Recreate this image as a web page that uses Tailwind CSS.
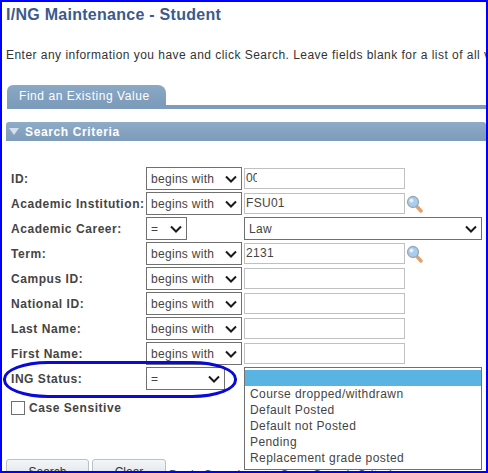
<!DOCTYPE html>
<html lang="en">
<head>
    <meta charset="UTF-8">
    <title>I/NG Maintenance - Student</title>
    <script src="https://cdn.jsdelivr.net/npm/@tailwindcss/browser@4"></script>
</head>
<body class="bg-white">
<div class="relative w-[488px] h-[473px] overflow-hidden border-2 border-[#0000ff] bg-white font-['Liberation_Sans',Arial,sans-serif] text-[#444]">

    <!-- Title and intro -->
    <h1 class="pl-[4px] pt-[3px] h-[20px] text-[16px] leading-[20px] font-bold tracking-[0.27px] text-[#3c5a8c] whitespace-nowrap">I/NG Maintenance - Student</h1>
    <p class="pl-[4px] mt-[23px] h-[20px] text-[12px] leading-[20px] tracking-[0.47px] text-[#333] whitespace-nowrap overflow-hidden">Enter any information you have and click Search. Leave fields blank for a list of all values.</p>

    <!-- Tab -->
    <div class="mt-[20px] ml-[5px] h-[24px] border-b-[4px] border-[#7d9bba]">
        <div class="w-[159px] h-[20px] pl-[12px] rounded-tl-[6px] rounded-tr-[8px] bg-gradient-to-b from-[#8aa9c6] to-[#7d9bba] text-[12px] leading-[22px] text-white tracking-[0.55px]">Find an Existing Value</div>
    </div>

    <!-- Section header -->
    <div class="mt-[13px] ml-[4px] h-[19px] flex items-center rounded-t-[3px] bg-gradient-to-b from-[#8eabc8] to-[#7d9bba]">
        <svg class="ml-[3px] w-[10px] h-[7px]" viewBox="0 0 10 7"><path d="M0 0H10L5 7Z" fill="#d5e0ea"/></svg>
        <span class="ml-[6px] text-[12px] font-bold text-white tracking-[0.63px]">Search Criteria</span>
    </div>

    <!-- Search rows -->
    <div class="mt-[26px] ml-[9px] flex flex-col gap-[2px] text-[12px] text-[#444]">
        <div class="flex items-center h-[23px]">
            <label class="w-[135px] pt-[1px] font-bold tracking-[0.55px] whitespace-nowrap">ID:</label>
            <div class="w-[96px] h-[23px] flex items-center justify-between pl-[4px] pr-[4px] border border-[#707070] bg-white tracking-[0.3px]">begins with<svg class="w-[12px] h-[8px]" viewBox="0 0 12 8"><path d="M1 1.5L6 6.5L11 1.5" fill="none" stroke="#1a1a1a" stroke-width="2"/></svg></div>
            <div class="ml-[2px] w-[161px] h-[21px] pl-[1px] border border-[#c0c0c0] leading-[18px]"><span class="block w-[11px] overflow-hidden">00</span></div>
        </div>
        <div class="flex items-center h-[23px]">
            <label class="w-[135px] pt-[1px] font-bold tracking-[0.55px] whitespace-nowrap">Academic Institution:</label>
            <div class="w-[96px] h-[23px] flex items-center justify-between pl-[4px] pr-[4px] border border-[#707070] bg-white tracking-[0.3px]">begins with<svg class="w-[12px] h-[8px]" viewBox="0 0 12 8"><path d="M1 1.5L6 6.5L11 1.5" fill="none" stroke="#1a1a1a" stroke-width="2"/></svg></div>
            <div class="ml-[2px] w-[161px] h-[21px] pl-[1px] border border-[#c0c0c0] leading-[18px] tracking-[0.3px]">FSU01</div>
            <svg class="ml-[1px] w-[17px] h-[18px]" viewBox="0 0 17 18"><path d="M10.5 11L15 16" stroke="#e0a070" stroke-width="3.4" stroke-linecap="round"/><circle cx="7" cy="7" r="5.5" fill="#a9cdee" stroke="#9aa8b2" stroke-width="1.3"/><circle cx="5.5" cy="5.5" r="2" fill="#e4f1fb"/></svg>
        </div>
        <div class="flex items-center h-[23px]">
            <label class="w-[135px] pt-[1px] font-bold tracking-[0.55px] whitespace-nowrap">Academic Career:</label>
            <div class="w-[41px] h-[23px] flex items-center justify-between pl-[4px] pr-[4px] border border-[#707070] bg-white">=<svg class="w-[12px] h-[8px]" viewBox="0 0 12 8"><path d="M1 1.5L6 6.5L11 1.5" fill="none" stroke="#1a1a1a" stroke-width="2"/></svg></div>
            <div class="ml-[57px] w-[238px] h-[23px] flex items-center justify-between pl-[4px] pr-[4px] border border-[#707070] bg-white tracking-[0.3px]">Law<svg class="w-[12px] h-[8px]" viewBox="0 0 12 8"><path d="M1 1.5L6 6.5L11 1.5" fill="none" stroke="#1a1a1a" stroke-width="2"/></svg></div>
        </div>
        <div class="flex items-center h-[23px]">
            <label class="w-[135px] pt-[1px] font-bold tracking-[0.55px] whitespace-nowrap">Term:</label>
            <div class="w-[96px] h-[23px] flex items-center justify-between pl-[4px] pr-[4px] border border-[#707070] bg-white tracking-[0.3px]">begins with<svg class="w-[12px] h-[8px]" viewBox="0 0 12 8"><path d="M1 1.5L6 6.5L11 1.5" fill="none" stroke="#1a1a1a" stroke-width="2"/></svg></div>
            <div class="ml-[2px] w-[161px] h-[21px] pl-[1px] border border-[#c0c0c0] leading-[18px] tracking-[0.3px]">2131</div>
            <svg class="ml-[1px] w-[17px] h-[18px]" viewBox="0 0 17 18"><path d="M10.5 11L15 16" stroke="#e0a070" stroke-width="3.4" stroke-linecap="round"/><circle cx="7" cy="7" r="5.5" fill="#a9cdee" stroke="#9aa8b2" stroke-width="1.3"/><circle cx="5.5" cy="5.5" r="2" fill="#e4f1fb"/></svg>
        </div>
        <div class="flex items-center h-[23px]">
            <label class="w-[135px] pt-[1px] font-bold tracking-[0.55px] whitespace-nowrap">Campus ID:</label>
            <div class="w-[96px] h-[23px] flex items-center justify-between pl-[4px] pr-[4px] border border-[#707070] bg-white tracking-[0.3px]">begins with<svg class="w-[12px] h-[8px]" viewBox="0 0 12 8"><path d="M1 1.5L6 6.5L11 1.5" fill="none" stroke="#1a1a1a" stroke-width="2"/></svg></div>
            <div class="ml-[2px] w-[161px] h-[21px] border border-[#c0c0c0]"></div>
        </div>
        <div class="flex items-center h-[23px]">
            <label class="w-[135px] pt-[1px] font-bold tracking-[0.55px] whitespace-nowrap">National ID:</label>
            <div class="w-[96px] h-[23px] flex items-center justify-between pl-[4px] pr-[4px] border border-[#707070] bg-white tracking-[0.3px]">begins with<svg class="w-[12px] h-[8px]" viewBox="0 0 12 8"><path d="M1 1.5L6 6.5L11 1.5" fill="none" stroke="#1a1a1a" stroke-width="2"/></svg></div>
            <div class="ml-[2px] w-[161px] h-[21px] border border-[#c0c0c0]"></div>
        </div>
        <div class="flex items-center h-[23px]">
            <label class="w-[135px] pt-[1px] font-bold tracking-[0.55px] whitespace-nowrap">Last Name:</label>
            <div class="w-[96px] h-[23px] flex items-center justify-between pl-[4px] pr-[4px] border border-[#707070] bg-white tracking-[0.3px]">begins with<svg class="w-[12px] h-[8px]" viewBox="0 0 12 8"><path d="M1 1.5L6 6.5L11 1.5" fill="none" stroke="#1a1a1a" stroke-width="2"/></svg></div>
            <div class="ml-[2px] w-[161px] h-[21px] border border-[#c0c0c0]"></div>
        </div>
        <div class="flex items-center h-[23px]">
            <label class="w-[135px] pt-[1px] font-bold tracking-[0.55px] whitespace-nowrap">First Name:</label>
            <div class="w-[96px] h-[23px] flex items-center justify-between pl-[4px] pr-[4px] border border-[#707070] bg-white tracking-[0.3px]">begins with<svg class="w-[12px] h-[8px]" viewBox="0 0 12 8"><path d="M1 1.5L6 6.5L11 1.5" fill="none" stroke="#1a1a1a" stroke-width="2"/></svg></div>
            <div class="ml-[2px] w-[161px] h-[21px] border border-[#c0c0c0]"></div>
        </div>
        <div class="flex items-center h-[23px]">
            <label class="w-[135px] pt-[1px] font-bold tracking-[0.55px] whitespace-nowrap">ING Status:</label>
            <div class="w-[79px] h-[23px] flex items-center justify-between pl-[4px] pr-[4px] border border-[#707070] bg-white">=<svg class="w-[12px] h-[8px]" viewBox="0 0 12 8"><path d="M1 1.5L6 6.5L11 1.5" fill="none" stroke="#1a1a1a" stroke-width="2"/></svg></div>
        </div>
        <div class="flex items-center h-[20px] mt-[6px]">
            <span class="w-[14px] h-[14px] border border-[#707070] bg-white"></span>
            <span class="ml-[4px] font-bold tracking-[0.55px]">Case Sensitive</span>
        </div>
    </div>

    <!-- Buttons, cut off at the bottom of the screenshot -->
    <div class="mt-[41px] ml-[4px] flex items-start text-[12px]">
        <div class="w-[83px] h-[24px] text-center leading-[24px] rounded-[3px] border border-[#b8c2cc] bg-gradient-to-b from-[#f4f6f8] to-[#d8dfe6] text-[#333]">Search</div>
        <div class="ml-[3px] w-[74px] h-[24px] text-center leading-[24px] rounded-[3px] border border-[#b8c2cc] bg-gradient-to-b from-[#f4f6f8] to-[#d8dfe6] text-[#333]">Clear</div>
        <span class="ml-[3px] mt-[4px] leading-[24px] text-[#3c5a8c] whitespace-nowrap tracking-[0.4px]">Basic Search</span>
        <span class="ml-[36px] mt-[4px] leading-[24px] text-[#3c5a8c] whitespace-nowrap tracking-[0.4px]">Save Search Criteria</span>
    </div>

    <!-- Open dropdown list -->
    <div class="absolute left-[242px] top-[365px] w-[238px] h-[103px] border border-[#707070] bg-white pt-[2px] text-[12px] leading-[16px] text-[#444] tracking-[0.42px]">
        <div class="h-[16px] bg-[#5ab4e2]"></div>
        <div class="pl-[5px]">Course dropped/withdrawn</div>
        <div class="pl-[5px]">Default Posted</div>
        <div class="pl-[5px]">Default not Posted</div>
        <div class="pl-[5px]">Pending</div>
        <div class="pl-[5px]">Replacement grade posted</div>
    </div>

    <!-- Hand-drawn highlight round ING Status -->
    <div class="absolute left-[1px] top-[359px] w-[234px] h-[37px] rounded-[45px/18px] border-[3px] border-[#0a0ad8]"></div>
</div>
</body>
</html>
